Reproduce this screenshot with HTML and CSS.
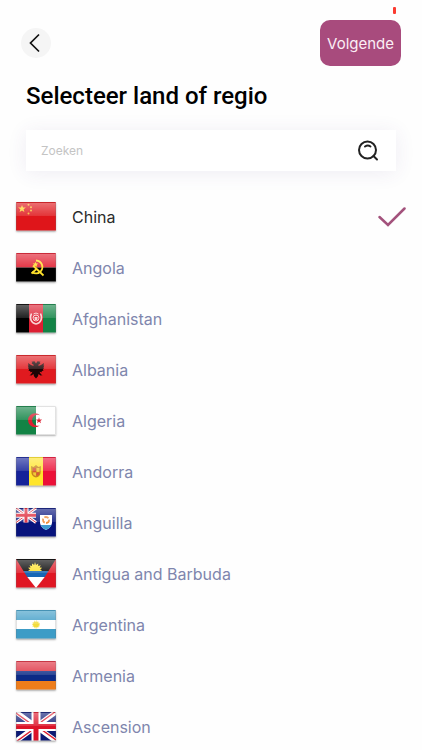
FILE: index.html
```html
<!DOCTYPE html>
<html lang="nl">

<head>
  <meta charset="UTF-8">
  <meta name="viewport" content="width=device-width, initial-scale=1.0">
  <title>Selecteer land of regio</title>
  <link rel="stylesheet" href="styles.css">
</head>

<body>
  <form class="screen">
    <span class="recording"></span>

    <header class="topbar">
      <button type="button" class="back" aria-label="Terug">
        <svg width="30" height="30" viewBox="0 0 30 30"><path d="M18 6.500L9.500 15l8.500 8.500" /></svg>
      </button>
      <button type="submit" class="next">Volgende</button>
    </header>

    <h1>Selecteer land of regio</h1>

    <!-- Search -->
    <div class="search">
      <input type="search" id="search" placeholder="Zoeken" aria-label="Zoeken">
      <button type="button" class="searchButton" aria-label="Zoek">
        <svg width="22" height="22" viewBox="0 0 22 22">
          <circle cx="10.500" cy="10" r="8.500" />
          <path d="M16.500 16l3.500 3.500" />
          <path d="M8 6.500q2.800-1.800 5.500 0" />
        </svg>
      </button>
    </div>

    <!-- Countries -->
    <ul class="countries">
      <li>
        <label class="country">
          <input type="radio" name="country" value="CN" checked>
          <span class="flag">
            <svg viewBox="0 0 40 29">
              <path fill="#df151a" d="M0 0h40v29H0z" />
              <path fill="#fdd22f" d="M6 3l1 2.600h2.900L7.600 7.300l.8 2.800L6 8.500l-2.400 1.600.8-2.800L2.100 5.600H5z" />
              <g fill="#f9b62c">
                <circle cx="12.500" cy="2.800" r="1" />
                <circle cx="15" cy="5.200" r="1" />
                <circle cx="15" cy="8.600" r="1" />
                <circle cx="12.500" cy="11.400" r="1" />
              </g>
            </svg>
          </span>
          <span class="name">China</span>
          <svg class="check" width="28" height="20" viewBox="0 0 28 20"><path d="M1.500 10l8.500 8L26.500 1.500" /></svg>
        </label>
      </li>
      <li>
        <label class="country">
          <input type="radio" name="country" value="AO">
          <span class="flag">
            <svg viewBox="0 0 40 29">
              <path fill="#e01b2d" d="M0 0h40v14.500H0z" />
              <path fill="#000" d="M0 14.500h40V29H0z" />
              <g fill="none" stroke="#ffe12b" stroke-width="1.800">
                <path d="M20 7.500c6 .5 8 6.500 5 10.500-2.500 3.200-6.500 3-9 1" />
                <path d="M17 12.500l10.500 10" />
                <path d="M15.500 20.500l5-4.500" />
              </g>
              <path fill="#ffe12b" d="M19.500 8.800l.8 1.800h2l-1.600 1.300.6 2-1.800-1.200-1.800 1.200.6-2-1.600-1.300h2z" />
            </svg>
          </span>
          <span class="name">Angola</span>
          <svg class="check" width="28" height="20" viewBox="0 0 28 20"><path d="M1.500 10l8.500 8L26.500 1.500" /></svg>
        </label>
      </li>
      <li>
        <label class="country">
          <input type="radio" name="country" value="AF">
          <span class="flag">
            <svg viewBox="0 0 40 29">
              <path fill="#000" d="M0 0h13v29H0z" />
              <path fill="#dc1f32" d="M13 0h14v29H13z" />
              <path fill="#128345" d="M27 0h13v29H27z" />
              <g fill="none" stroke="#f9d2d2">
                <path stroke-width="1.600" d="M15.500 9.500c-2.500 5 0 10 4.500 10.500 4.500-.5 7-5.500 4.500-10.500" />
                <circle cx="20" cy="14" r="3" />
                <path d="M17.500 10q2.500-2 5 0" />
              </g>
              <path fill="#f9d2d2" d="M18.500 13h3v3h-3z" />
            </svg>
          </span>
          <span class="name">Afghanistan</span>
          <svg class="check" width="28" height="20" viewBox="0 0 28 20"><path d="M1.500 10l8.500 8L26.500 1.500" /></svg>
        </label>
      </li>
      <li>
        <label class="country">
          <input type="radio" name="country" value="AL">
          <span class="flag">
            <svg viewBox="0 0 40 29">
              <path fill="#e01a1f" d="M0 0h40v29H0z" />
              <path fill="#1c0405" d="M20 8.500l-1.500-2.200-3 .4 1 1.300-1 .8 2 .7v1.500l-2.500-1-3-2 .5 2.500-.8.300 1 1.800-.8.500 1.300 1.500-.8.800 2 .8-.4 1 2.500-.4-1.500 2.500-1.500 1 2 .2 2-1.500.5 2.200 2 2.300 2-2.300.5-2.200 2 1.500 2-.2-1.500-1-1.500-2.500 2.500.4-.4-1 2-.8-.8-.8 1.300-1.500-.8-.5 1-1.800-.8-.3.500-2.500-3 2-2.500 1V9.500l2-.7-1-.8 1-1.300-3-.4z" />
            </svg>
          </span>
          <span class="name">Albania</span>
          <svg class="check" width="28" height="20" viewBox="0 0 28 20"><path d="M1.500 10l8.500 8L26.500 1.500" /></svg>
        </label>
      </li>
      <li>
        <label class="country">
          <input type="radio" name="country" value="DZ">
          <span class="flag">
            <svg viewBox="0 0 40 29">
              <path fill="#128345" d="M0 0h20v29H0z" />
              <path fill="#fff" d="M20 0h20v29H20z" />
              <path fill="#dc1f32" d="M24 9.300a7 7 0 1 0 0 9.900 5.500 5.500 0 1 1 0-9.900zM23 11.300l.8 2.200h2.400l-1.900 1.400.7 2.300-2-1.400-2 1.400.7-2.300-1.900-1.400h2.400z" />
            </svg>
          </span>
          <span class="name">Algeria</span>
          <svg class="check" width="28" height="20" viewBox="0 0 28 20"><path d="M1.500 10l8.500 8L26.500 1.500" /></svg>
        </label>
      </li>
      <li>
        <label class="country">
          <input type="radio" name="country" value="AD">
          <span class="flag">
            <svg viewBox="0 0 40 29">
              <path fill="#152299" d="M0 0h13v29H0z" />
              <path fill="#ffe52b" d="M13 0h14v29H13z" />
              <path fill="#ec1138" d="M27 0h13v29H27z" />
              <path fill="#c8861f" d="M15 9l2.500 1L20 8l2.500 2L25 9l-.5 7.500q-1 3.500-4.500 4-3.500-.5-4.500-4z" />
              <path fill="#d9543b" d="M17 11h3v4h-3zM20.500 15.500h3l-1 2.500-2 1z" />
              <path fill="#f1c83a" d="M20.500 11h3v4h-3zM17 15.500h3V19l-2.500-1z" />
            </svg>
          </span>
          <span class="name">Andorra</span>
          <svg class="check" width="28" height="20" viewBox="0 0 28 20"><path d="M1.500 10l8.500 8L26.500 1.500" /></svg>
        </label>
      </li>
      <li>
        <label class="country">
          <input type="radio" name="country" value="AI">
          <span class="flag">
            <svg viewBox="0 0 40 29">
              <path fill="#07137c" d="M0 0h40v29H0z" />
              <path stroke="#fff" stroke-width="3" d="M0 0l20 14.500M20 0L0 14.500" />
              <path stroke="#dc1f32" d="M0 0l20 14.500M20 0L0 14.500" />
              <path stroke="#fff" stroke-width="5" d="M10 0v14.500M0 7.200h20" />
              <path stroke="#dc1f32" stroke-width="3" d="M10 0v14.500M0 7.200h20" />
              <path fill="#fff" d="M24 7h12v8q-1 5-6 7-5-2-6-7z" />
              <path fill="#3e9bd1" d="M24.500 17h11q-1.500 3.500-5.500 5-4-1.500-5.500-5z" />
              <circle cx="30" cy="12" r="3" fill="none" stroke="#ed8b39" stroke-width="1.800" stroke-dasharray="4.500 1.500" />
            </svg>
          </span>
          <span class="name">Anguilla</span>
          <svg class="check" width="28" height="20" viewBox="0 0 28 20"><path d="M1.500 10l8.500 8L26.500 1.500" /></svg>
        </label>
      </li>
      <li>
        <label class="country">
          <input type="radio" name="country" value="AG">
          <span class="flag">
            <svg viewBox="0 0 40 29">
              <path fill="#e01623" d="M0 0h40v29H0z" />
              <path fill="#000" d="M0 0h40L32.500 12h-25z" />
              <path fill="#ffe12b" d="M12 12l2-1.500-2-1.700 2.600-.2-1.100-2.400 2.500.8v-2.600l2.200 1.500.8-2.900 1 2.900 2.200-1.500V7l2.500-.8-1.100 2.400 2.600.2-2 1.700 2 1.500z" />
              <path fill="#1767b5" d="M7.500 12h25L28.700 18H11.300z" />
              <path fill="#fff" d="M11.300 18h17.400L20 29z" />
            </svg>
          </span>
          <span class="name">Antigua and Barbuda</span>
          <svg class="check" width="28" height="20" viewBox="0 0 28 20"><path d="M1.500 10l8.500 8L26.500 1.500" /></svg>
        </label>
      </li>
      <li>
        <label class="country">
          <input type="radio" name="country" value="AR">
          <span class="flag">
            <svg viewBox="0 0 40 29">
              <path fill="#fff" d="M0 0h40v29H0z" />
              <path fill="#3d9cc6" d="M0 0h40v10H0zM0 19h40v10H0z" />
              <circle cx="20" cy="14.500" r="3" fill="#f2dc3c" />
              <circle cx="20" cy="14.500" r="3.500" fill="none" stroke="#f2dc3c" stroke-dasharray="1 1" />
            </svg>
          </span>
          <span class="name">Argentina</span>
          <svg class="check" width="28" height="20" viewBox="0 0 28 20"><path d="M1.500 10l8.500 8L26.500 1.500" /></svg>
        </label>
      </li>
      <li>
        <label class="country">
          <input type="radio" name="country" value="AM">
          <span class="flag">
            <svg viewBox="0 0 40 29">
              <path fill="#de2b3b" d="M0 0h40v10H0z" />
              <path fill="#0b2a86" d="M0 10h40v10H0z" />
              <path fill="#ee7d1b" d="M0 20h40v9H0z" />
            </svg>
          </span>
          <span class="name">Armenia</span>
          <svg class="check" width="28" height="20" viewBox="0 0 28 20"><path d="M1.500 10l8.500 8L26.500 1.500" /></svg>
        </label>
      </li>
      <li>
        <label class="country">
          <input type="radio" name="country" value="AC">
          <span class="flag">
            <svg viewBox="0 0 40 29">
              <path fill="#0c1a75" d="M0 0h40v29H0z" />
              <path stroke="#fff" stroke-width="5" d="M0 0l40 29M40 0L0 29" />
              <path stroke="#dc1f32" stroke-width="1.500" d="M0 1l16 11.500M39 0L23 11.500M40 28L24 16.500M1 29l16-11.500" />
              <path stroke="#fff" stroke-width="9" d="M20 0v29M0 14.500h40" />
              <path stroke="#dc1328" stroke-width="5" d="M20 0v29M0 14.500h40" />
            </svg>
          </span>
          <span class="name">Ascension</span>
          <svg class="check" width="28" height="20" viewBox="0 0 28 20"><path d="M1.500 10l8.500 8L26.500 1.500" /></svg>
        </label>
      </li>
    </ul>
  </form>
</body>

</html>
```
FILE: styles.css
```css
* {
  box-sizing: border-box;
}

body {
  margin: 0;
  background-color: #fefefe;
  font-family: Inter, "Liberation Sans", sans-serif;
}

.screen {
  position: relative;
  display: flex;
  flex-direction: column;
  height: 100vh;
}

/* Recording indicator in the status bar */
.recording {
  position: absolute;
  top: 7px;
  right: 26px;
  width: 3px;
  height: 7px;
  border-radius: 1px;
  background-color: #fb3b30;
}

button {
  padding: 0;
  border: none;
  font-family: inherit;
  cursor: pointer;
}

svg {
  display: block;
  fill: none;
}

/* Top bar */
.topbar {
  display: flex;
  align-items: center;
  justify-content: space-between;
  padding: 20px 21px 0;
}

.back {
  border-radius: 50%;
  background-color: #f5f5f5;
}

.back svg {
  stroke: #111;
  stroke-width: 1.700;
}

.next {
  padding: 0 7px;
  height: 46px;
  border-radius: 10px;
  background-color: #a84b7d;
  color: #fbeef5;
  font-size: 15px;
}

h1 {
  margin: 14px 26px 18px;
  color: #000;
  font-family: Roboto, sans-serif;
  font-size: 24px;
  font-weight: 500;
  line-height: 32px;
}

/* Search */
.search {
  display: flex;
  align-items: center;
  flex-shrink: 0;
  height: 41px;
  margin: 0 26px;
  padding: 0 17px 0 15px;
  background-color: #fff;
  box-shadow: 0 2px 20px rgba(80, 60, 130, 0.09);
}

.search input {
  flex: 1;
  min-width: 0;
  padding: 0;
  border: none;
  outline: none;
  background: none;
  font-family: inherit;
  font-size: 12px;
}

.search input::placeholder {
  color: #c4c4c4;
}

.searchButton {
  background: none;
}

.searchButton svg {
  stroke: #222;
  stroke-width: 2;
  stroke-linecap: round;
}

/* Country list */
.countries {
  flex: 1;
  min-height: 0;
  margin: 20px 0 0;
  padding: 0;
  list-style: none;
  overflow-y: auto;
  scrollbar-width: none;
}

.country {
  position: relative;
  display: flex;
  align-items: center;
  gap: 16px;
  height: 51px;
  padding: 0 16px;
  color: #7f86ad;
  font-size: 16px;
  cursor: pointer;
}

.country input {
  position: absolute;
  opacity: 0;
}

.flag {
  position: relative;
  width: 40px;
  height: 29px;
  border-radius: 1px;
  box-shadow: 0 1px 2px rgba(0, 0, 0, 0.3);
  overflow: hidden;
}

/* Glossy shine */
.flag::after {
  content: "";
  position: absolute;
  inset: 0;
  border: 1px solid rgba(110, 110, 110, 0.2);
  background: linear-gradient(rgba(255, 255, 255, 0.38), rgba(255, 255, 255, 0.12) 50%, transparent 50%);
}

.name {
  flex: 1;
}

.check {
  display: none;
  stroke: #a3527c;
  stroke-width: 2.500;
  stroke-linecap: round;
}

.country input:checked ~ .name {
  color: #2b2b2b;
}

.country input:checked ~ .check {
  display: block;
}
```
